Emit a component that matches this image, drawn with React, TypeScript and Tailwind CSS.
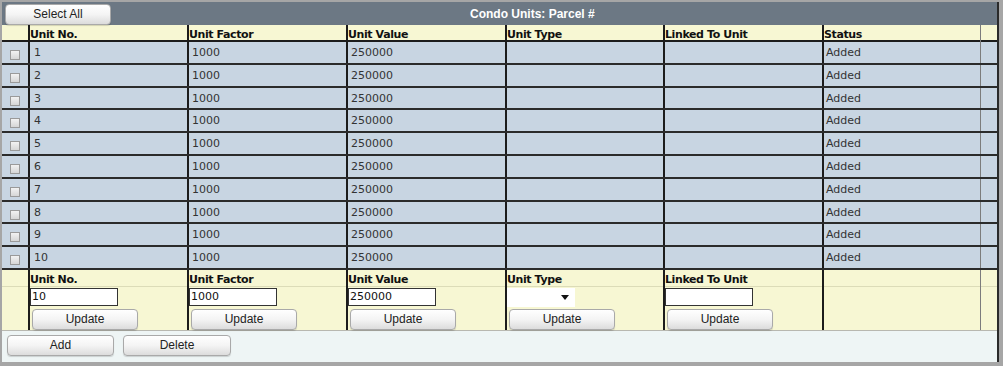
import React from 'react';

interface Unit {
  no: string;
  factor: string;
  value: string;
  type: string;
  linked: string;
  status: string;
}

const units: Unit[] = Array.from({ length: 10 }, (_, i) => ({
  no: String(i + 1),
  factor: '1000',
  value: '250000',
  type: '',
  linked: '',
  status: 'Added',
}));

const cols = 'grid grid-cols-[26px_159px_159px_159px_158px_159px_158px_1fr]';
const cell = 'border-l-2 border-[#1c1c1c]';
const lastCell = 'border-l border-[#7c7c7c]';
const font = { fontFamily: '"DejaVu Sans", Verdana, sans-serif' };

const Btn: React.FC<{ label: string; className?: string }> = ({ label, className }) => (
  <button
    className={`h-[21px] w-[106px] rounded-[4px] border border-[#a9a9a9] bg-gradient-to-b from-white via-[#f4f4f4] to-[#dcdcdc] text-[12px] text-[#222] leading-none shadow-[0_1px_1px_rgba(0,0,0,0.15)] ${className ?? ''}`}
    style={{ fontFamily: '"Liberation Sans", Arial, sans-serif' }}
  >
    {label}
  </button>
);

const Checkbox: React.FC = () => (
  <div className="mt-[8px] ml-[8px] h-[10px] w-[10px] border border-[#9a9a9a] bg-gradient-to-b from-[#f2f2f2] to-[#d6d6d6]" />
);

const headers = ['Unit No.', 'Unit Factor', 'Unit Value', 'Unit Type', 'Linked To Unit', 'Status'];

const App: React.FC = () => {
  return (
    <div className="w-[1003px] h-[366px] bg-[#a6a6a6] pl-[2px] pt-[2px] pr-[4px] pb-[4px]">
      <div className="h-full border-r-2 border-[#2a2a2a] bg-[#eef5f5]" style={font}>
        {/* Title bar */}
        <div className="flex h-[23px] items-center bg-[#6c7884] pl-[3px]">
          <Btn label="Select All" className="h-[20px] mt-[1px]" />
          <span
            className="ml-[359px] text-[12px] font-bold text-white"
            style={{ fontFamily: '"Liberation Sans", Arial, sans-serif' }}
          >
            Condo Units: Parcel #
          </span>
        </div>

        {/* Header row */}
        <div className={`${cols} h-[17px] border-b-2 border-[#1c1c1c] bg-[#f7f7d3] text-[11px] font-bold text-[#111] leading-[15px] tracking-[-0.4px]`}>
          <div />
          {headers.map((h) => (
            <div key={h} className={`${cell} pt-[2px]`}>
              {h}
            </div>
          ))}
          <div className={lastCell} />
        </div>

        {/* Body rows */}
        {units.map((u) => (
          <div
            key={u.no}
            className={`${cols} h-[22.8px] border-b-2 border-[#2b2b2b] bg-[#c8d5e2] text-[11px] text-[#333] leading-[19px]`}
          >
            <div>
              <Checkbox />
            </div>
            <div className={`${cell} pl-[4px] pt-[1px]`}>{u.no}</div>
            <div className={`${cell} pl-[3px] pt-[1px]`}>{u.factor}</div>
            <div className={`${cell} pl-[3px] pt-[1px]`}>{u.value}</div>
            <div className={cell}>{u.type}</div>
            <div className={cell}>{u.linked}</div>
            <div className={`${cell} pl-[2px] pt-[1px]`}>{u.status}</div>
            <div className={lastCell} />
          </div>
        ))}

        {/* Edit header */}
        <div className={`${cols} h-[17px] border-b border-[#dcdcb8] bg-[#f7f7d3] text-[11px] font-bold text-[#111] leading-[16px] tracking-[-0.4px]`}>
          <div />
          {headers.slice(0, 5).map((h) => (
            <div key={h} className={`${cell} pt-[2px]`}>
              {h}
            </div>
          ))}
          <div className={cell} />
          <div className={lastCell} />
        </div>

        {/* Edit inputs */}
        <div className={`${cols} h-[44px] border-b border-[#b8b8b0] bg-[#f7f7d3]`}>
          <div />
          {['10', '1000', '250000'].map((v, i) => (
            <div key={i} className={`${cell} flex flex-col`}>
              <input
                readOnly
                value={v}
                className="mt-[1px] h-[18px] w-[88px] border border-[#333] bg-white px-[1px] text-[11px] text-[#111] outline-none"
                style={font}
              />
              <Btn label="Update" className="mt-[3px] ml-[2px]" />
            </div>
          ))}
          <div className={`${cell} flex flex-col`}>
            <div className="relative mt-[1px] h-[19px] w-[68px] bg-white">
              <span className="absolute right-[6px] top-[7px] h-0 w-0 border-l-[4px] border-r-[4px] border-t-[5px] border-l-transparent border-r-transparent border-t-[#111]" />
            </div>
            <Btn label="Update" className="mt-[2px] ml-[2px]" />
          </div>
          <div className={`${cell} flex flex-col`}>
            <input
              readOnly
              value=""
              className="mt-[1px] h-[18px] w-[88px] border border-[#333] bg-white px-[1px] text-[11px] outline-none"
            />
            <Btn label="Update" className="mt-[3px] ml-[2px]" />
          </div>
          <div className={cell} />
          <div className={lastCell} />
        </div>

        {/* Footer actions */}
        <div className="flex h-[30px] items-start gap-[9px] bg-[#eef5f5] pl-[5px] pt-[4px]">
          <Btn label="Add" className="w-[107px]" />
          <Btn label="Delete" className="w-[108px]" />
        </div>
      </div>
    </div>
  );
};

export default App;
